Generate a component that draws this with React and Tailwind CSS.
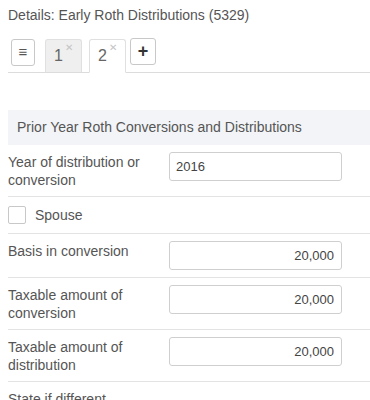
import React from 'react';

const rows = [
  { label: 'Year of distribution or conversion', value: '2016', align: 'left' },
  { type: 'check', label: 'Spouse' },
  { label: 'Basis in conversion', value: '20,000', align: 'right' },
  { label: 'Taxable amount of conversion', value: '20,000', align: 'right' },
  { label: 'Taxable amount of distribution', value: '20,000', align: 'right' },
];

const Field = ({ row }) => {
  if (row.type === 'check') {
    return (
      <div className="flex items-center gap-[9px] h-[37px] border-b border-[#e3e3e3]">
        <span className="w-[18px] h-[18px] border border-[#c8c8c8] rounded-[2px] bg-white" />
        <span>{row.label}</span>
      </div>
    );
  }
  return (
    <div className="flex items-start py-[7px] border-b border-[#e3e3e3]">
      <div className="w-[161px] pr-2 leading-[18px] pt-[1px]">{row.label}</div>
      <div
        className={`w-[173px] h-[29px] border border-[#cfcfcf] rounded-[3px] bg-white flex items-center px-[6px] text-[13px] text-[#444] ${
          row.align === 'right' ? 'justify-end pr-[7px]' : ''
        }`}
      >
        {row.value}
      </div>
    </div>
  );
};

const Tab = ({ n, active }) => (
  <div
    className={`w-[37px] h-[34px] -mb-px border border-[#e0e0e0] rounded-t-[3px] flex items-start justify-center pt-[3px] ${
      active ? 'bg-white border-b-white ml-[7px]' : 'bg-[#efefef] border-b-[#dcdcdc] ml-[10px]'
    }`}
  >
    <span className="text-[16px] leading-[18px] text-[#666] mt-[4px]">{n}</span>
    <span className="text-[10px] leading-[10px] text-[#c4c4c4] ml-[2px]">✕</span>
  </div>
);

export default function App() {
  return (
    <div className="w-[370px] h-[400px] overflow-hidden bg-white pl-2 text-[14px] text-[#555]" style={{ fontFamily: '"Liberation Sans", Arial, sans-serif' }}>
      <div className="pt-[5px] h-[36px]">Details: Early Roth Distributions (5329)</div>
      <div className="flex items-end border-b border-[#dcdcdc] h-[37px]">
        <div className="ml-[3px] mb-[6px] w-[24px] h-[27px] border border-[#c8c8c8] rounded-[3px] flex items-center justify-center text-[#555] text-[15px]">
          ≡
        </div>
        <Tab n="1" />
        <Tab n="2" active />
        <div className="ml-[4px] mb-[7px] w-[26px] h-[27px] border border-[#c8c8c8] rounded-[3px] flex items-center justify-center text-[#333] text-[18px] font-bold">
          +
        </div>
      </div>
      <div className="mt-[37px] h-[35px] bg-[#f2f4f7] flex items-center pl-[9px] text-[#555]">
        Prior Year Roth Conversions and Distributions
      </div>
      {rows.map((r, i) => (
        <Field key={i} row={r} />
      ))}
      <div className="pt-[8px] leading-[18px]">State if different</div>
    </div>
  );
}
